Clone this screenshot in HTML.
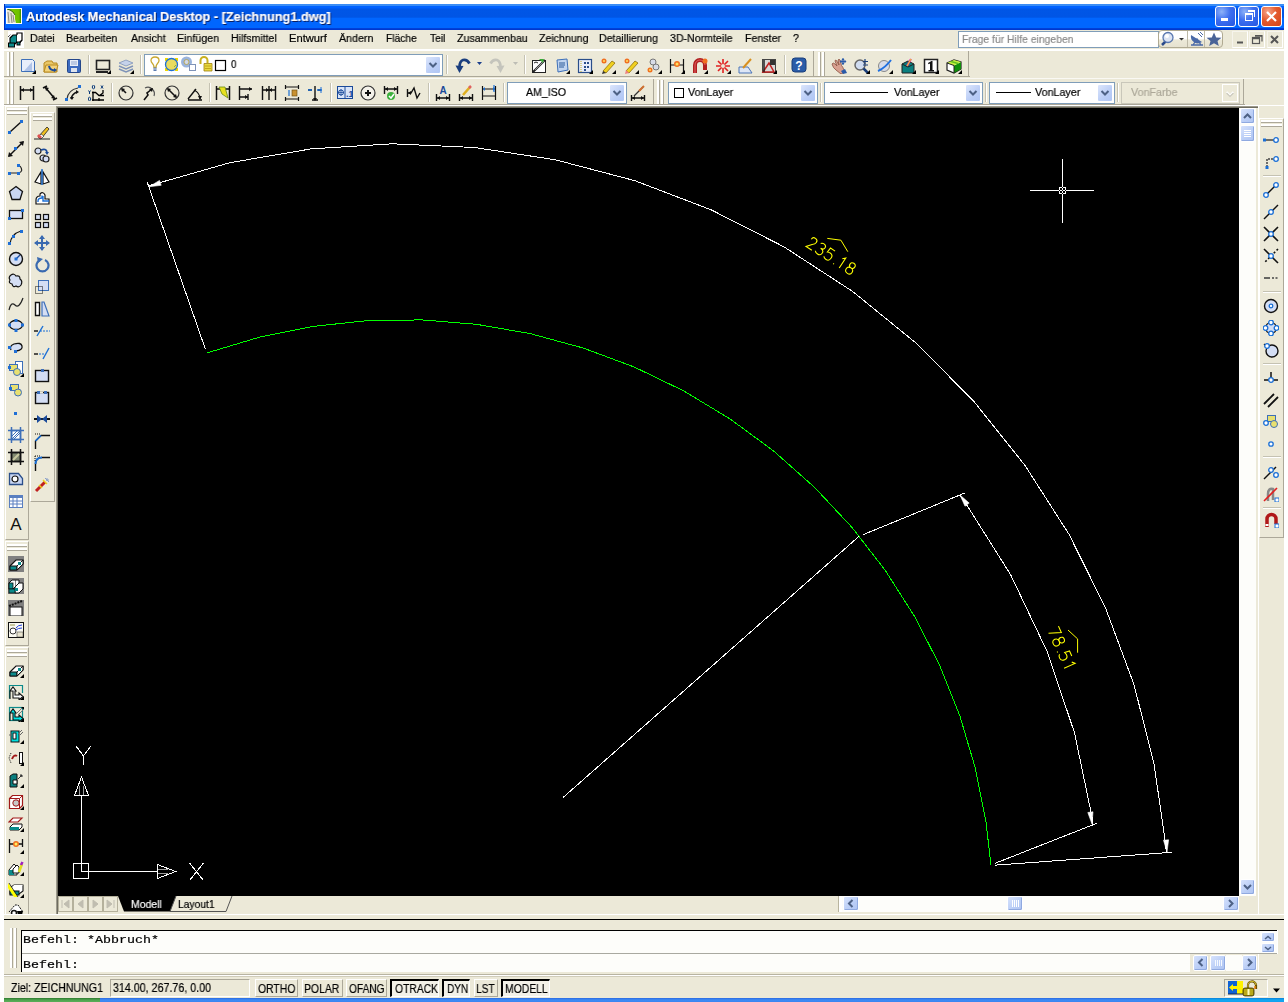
<!DOCTYPE html><html><head><meta charset="utf-8"><style>
html,body{margin:0;padding:0;}
body{width:1288px;height:1002px;position:relative;overflow:hidden;background:#fff;font-family:"Liberation Sans",sans-serif;}
body>div,body>svg{position:absolute;}
.t{white-space:nowrap;line-height:1;will-change:transform;-webkit-text-stroke:0.2px currentColor;}
</style></head><body>
<div style="left:4px;top:4px;width:1280px;height:26px;background:linear-gradient(#3A8CF4 0,#3C8EF6 1.5px,#0062FF 2.5px,#0060FE 4px,#0056E6 5px,#0055E5 13.3px,#0066FF 14px,#0066FF 23.8px,#0040D8 24.5px,#0033CC 26px);"></div>
<div style="left:4px;top:4px;width:1px;height:26px;background:#0030C0"></div>
<div style="left:6px;top:8px;width:14px;height:14px;border:1px solid #fff;background:linear-gradient(90deg,#4F9A00,#74C800 40%,#70C000 85%,#3E8A00)"></div>
<svg style="left:7px;top:9px" width="14" height="14"><path d="M0 0L3 1L6 3L8 6L8 10L9 14H0Z" fill="#E8E4DA"/><path d="M1 3L2 14M4 4L5 14M6 6L7 13" stroke="#8A8A80" stroke-width="1"/><path d="M0 0L3 1L6 3L8 6" stroke="#3A6A10" fill="none"/></svg>
<div class="t" style="left:26px;top:10.97px;font-size:12.79px;font-family:Liberation Sans;font-weight:bold;color:#fff;transform:scaleX(0.9981);transform-origin:0 0;text-shadow:1px 1px 0 #0A1E60;">Autodesk Mechanical Desktop - [Zeichnung1.dwg]</div>
<div style="left:1215px;top:6px;width:19px;height:19px;border:1px solid #fff;border-radius:3px;background:radial-gradient(circle at 30% 25%,#8DB2F8 0,#3C6EF0 45%,#2456E0 100%)"></div>
<div style="left:1238px;top:6px;width:19px;height:19px;border:1px solid #fff;border-radius:3px;background:radial-gradient(circle at 30% 25%,#8DB2F8 0,#3C6EF0 45%,#2456E0 100%)"></div>
<div style="left:1261px;top:6px;width:19px;height:19px;border:1px solid #fff;border-radius:3px;background:radial-gradient(circle at 30% 25%,#F6A58A 0,#E45A2E 45%,#D44418 100%)"></div>
<div style="left:1221px;top:18px;width:7px;height:3px;background:#fff"></div>
<div style="left:1245px;top:13px;width:6px;height:5px;border:1px solid #fff;border-top-width:2px"></div>
<div style="left:1248px;top:10px;width:6px;height:5px;border:1px solid #fff;border-top-width:2px;border-left:none;border-bottom:none"></div>
<svg style="left:1261px;top:6px" width="21" height="21"><path d="M6 6L15 15M15 6L6 15" stroke="#fff" stroke-width="2.2"/></svg>
<div style="left:4px;top:30px;width:1280px;height:19px;background:#ECE9D8"></div>
<div style="left:4px;top:49px;width:1280px;height:2px;background:#fff"></div>
<svg style="left:7px;top:31px" width="18" height="18"><rect x="1" y="0" width="16" height="17" fill="#fff"/><path d="M3 7L6 4H10V11L7 14H3Z" fill="#0B8A8A" stroke="#000" stroke-width="1.2"/><path d="M10 4V2H15V9L12 12H10" fill="#fff" stroke="#000" stroke-width="1.2"/><rect x="10" y="11" width="3" height="3" fill="#0B8A8A" stroke="#000"/><path d="M3 12H8L7 14H3Z" fill="#fff"/><rect x="1.5" y="12" width="6" height="4" fill="#0B8A8A" stroke="#000"/><path d="M1 6L4 3M13 12L16 9" stroke="#000" stroke-dasharray="1 1"/></svg>
<div class="t" style="left:30px;top:33.25px;font-size:11.05px;font-family:Liberation Sans;font-weight:normal;color:#000;transform:scaleX(0.9617);transform-origin:0 0;">Datei</div>
<div class="t" style="left:66px;top:33.25px;font-size:11.05px;font-family:Liberation Sans;font-weight:normal;color:#000;transform:scaleX(0.9620);transform-origin:0 0;">Bearbeiten</div>
<div class="t" style="left:131px;top:33.25px;font-size:11.05px;font-family:Liberation Sans;font-weight:normal;color:#000;transform:scaleX(0.9552);transform-origin:0 0;">Ansicht</div>
<div class="t" style="left:177px;top:33.25px;font-size:11.05px;font-family:Liberation Sans;font-weight:normal;color:#000;transform:scaleX(0.9654);transform-origin:0 0;">Einfügen</div>
<div class="t" style="left:231px;top:33.25px;font-size:11.05px;font-family:Liberation Sans;font-weight:normal;color:#000;transform:scaleX(0.9547);transform-origin:0 0;">Hilfsmittel</div>
<div class="t" style="left:289px;top:33.25px;font-size:11.05px;font-family:Liberation Sans;font-weight:normal;color:#000;transform:scaleX(1.0094);transform-origin:0 0;">Entwurf</div>
<div class="t" style="left:339px;top:33.25px;font-size:11.05px;font-family:Liberation Sans;font-weight:normal;color:#000;transform:scaleX(0.9658);transform-origin:0 0;">Ändern</div>
<div class="t" style="left:386px;top:33.25px;font-size:11.05px;font-family:Liberation Sans;font-weight:normal;color:#000;transform:scaleX(0.9290);transform-origin:0 0;">Fläche</div>
<div class="t" style="left:430px;top:33.25px;font-size:11.05px;font-family:Liberation Sans;font-weight:normal;color:#000;transform:scaleX(0.9291);transform-origin:0 0;">Teil</div>
<div class="t" style="left:457px;top:33.25px;font-size:11.05px;font-family:Liberation Sans;font-weight:normal;color:#000;transform:scaleX(0.9603);transform-origin:0 0;">Zusammenbau</div>
<div class="t" style="left:539px;top:33.25px;font-size:11.05px;font-family:Liberation Sans;font-weight:normal;color:#000;transform:scaleX(0.9603);transform-origin:0 0;">Zeichnung</div>
<div class="t" style="left:599px;top:33.25px;font-size:11.05px;font-family:Liberation Sans;font-weight:normal;color:#000;transform:scaleX(0.9603);transform-origin:0 0;">Detaillierung</div>
<div class="t" style="left:670px;top:33.25px;font-size:11.05px;font-family:Liberation Sans;font-weight:normal;color:#000;transform:scaleX(0.9603);transform-origin:0 0;">3D-Normteile</div>
<div class="t" style="left:745px;top:33.25px;font-size:11.05px;font-family:Liberation Sans;font-weight:normal;color:#000;transform:scaleX(0.9603);transform-origin:0 0;">Fenster</div>
<div class="t" style="left:793px;top:33.25px;font-size:11.05px;font-family:Liberation Sans;font-weight:normal;color:#000;transform:scaleX(0.9603);transform-origin:0 0;">?</div>
<div style="left:958px;top:31px;width:201px;height:17px;background:#fff;border:1px solid #7F9DB9;box-sizing:border-box"></div>
<div class="t" style="left:962px;top:34.20px;font-size:11.34px;font-family:Liberation Sans;font-weight:normal;color:#8a8a8a;transform:scaleX(0.9175);transform-origin:0 0;">Frage für Hilfe eingeben</div>
<div style="left:1158px;top:30px;width:65px;height:18px;box-sizing:border-box;border:1px solid #B0AA92;border-radius:4px;background:linear-gradient(#FFFFFF 0,#FFFFFF 50%,#ECE9D8 55%,#E6E2D0 100%)"></div>
<div style="left:1187px;top:31px;width:1px;height:16px;background:#BDB9A6"></div>
<div style="left:1204px;top:31px;width:1px;height:16px;background:#BDB9A6"></div>
<svg style="left:1158px;top:30px" width="66" height="18"><path d="M4 15L8 11" stroke="#2A4A8A" stroke-width="2.5"/><circle cx="10" cy="7.5" r="5" fill="#DCE4F4" stroke="#5A78B0" stroke-width="1.3"/><circle cx="9" cy="6" r="2" fill="#fff"/><path d="M21 8H26L23.5 10.5Z" fill="#333"/><path d="M33 15H45M35 15L39 9L43 15" fill="none" stroke="#4A6AA8" stroke-width="1.3"/><path d="M33 5A7 7 0 0 0 44 12Z" fill="#4A6AA8"/><path d="M40 3L44 7M42 2L45 5" stroke="#4A6AA8"/><path d="M56 2.5L58.2 7.5L63.5 7.8L59.5 11L60.8 16L56 13.2L51.2 16L52.5 11L48.5 7.8L53.8 7.5Z" fill="#4A6498"/></svg>
<div style="left:1232px;top:31px;width:16px;height:17px;box-sizing:border-box;border-top:1px solid #F6F4EC;border-left:1px solid #F6F4EC;border-right:1px solid #fff;border-bottom:1px solid #fff;background:#ECE9D8"></div>
<div style="left:1249px;top:31px;width:16px;height:17px;box-sizing:border-box;border-top:1px solid #F6F4EC;border-left:1px solid #F6F4EC;border-right:1px solid #fff;border-bottom:1px solid #fff;background:#ECE9D8"></div>
<div style="left:1267px;top:31px;width:16px;height:17px;box-sizing:border-box;border-top:1px solid #F6F4EC;border-left:1px solid #F6F4EC;border-right:1px solid #fff;border-bottom:1px solid #fff;background:#ECE9D8"></div>
<svg style="left:1232px;top:31px" width="52" height="17"><path d="M5 11.5H11" stroke="#555" stroke-width="2"/><rect x="20.5" y="6.5" width="7" height="6" fill="none" stroke="#555" stroke-width="1.2"/><path d="M20.5 7.5H27.5" stroke="#555" stroke-width="1.5"/><path d="M23 4.5H30V10.5" fill="none" stroke="#555" stroke-width="1.2"/><path d="M23 5H30" stroke="#555" stroke-width="1.5"/><path d="M39 5L46 12M46 5L39 12" stroke="#555" stroke-width="2"/></svg>
<div style="left:4px;top:51px;width:1280px;height:26px;background:#ECE9D8"></div>
<div style="left:4px;top:76px;width:966px;height:1px;background:#ACA899"></div>
<div style="left:4px;top:77px;width:1280px;height:1px;background:#ECE9D8"></div>
<div style="left:4px;top:78px;width:1280px;height:1px;background:#FAF9F4"></div>
<div style="left:4px;top:79px;width:1280px;height:26px;background:#ECE9D8"></div>
<div style="left:4px;top:104px;width:1241px;height:1px;background:#ACA899"></div>
<div style="left:4px;top:106px;width:1280px;height:808px;background:#ECE9D8"></div>
<div style="left:7px;top:52px;width:2px;height:24px;background:#fff;border-right:1px solid #ACA899"></div>
<div style="left:11px;top:52px;width:2px;height:24px;background:#fff;border-right:1px solid #ACA899"></div>
<svg style="left:20px;top:58px" width="16" height="16" viewBox="0 0 16 16"><path d="M1.5 1.5H12.5L14.5 3.5V13.5H1.5Z" fill="#E8EEFA" stroke="#3D6FB8"/><path d="M4 13L12 4V13Z" fill="#AFC3E8"/><path d="M16 12V16H12Z" fill="#000"/></svg>
<svg style="left:43px;top:58px" width="16" height="16" viewBox="0 0 16 16"><path d="M1 5L4 3H9L10 5H14V14H1Z" fill="#E9C766" stroke="#B88A20"/><path d="M3 7H15L13 14H1Z" fill="#F2D27A" stroke="#B88A20"/><path d="M6 8Q7 13 12 12" stroke="#1B4A9A" stroke-width="2" fill="none"/><path d="M11 10L14 12L11 14Z" fill="#1B4A9A"/></svg>
<svg style="left:66px;top:58px" width="16" height="16" viewBox="0 0 16 16"><rect x="1.5" y="1.5" width="13" height="13" rx="1" fill="#3C6BC0" stroke="#24468A"/><rect x="4" y="2" width="8" height="6" fill="#E9EEF8"/><path d="M5 4H11M5 6H11" stroke="#8FA6D0"/><rect x="5" y="10" width="6" height="4" fill="#DDE3EE"/></svg>
<div style="left:88px;top:55px;width:1px;height:19px;background:#C5C2B2;border-right:1px solid #fff"></div>
<svg style="left:95px;top:58px" width="16" height="16" viewBox="0 0 16 16"><rect x="1.5" y="2.5" width="13" height="9" fill="#ECE9D8" stroke="#222" stroke-width="1.6"/><path d="M1 14H13" stroke="#222" stroke-width="2"/><path d="M16 12V16H12Z" fill="#000"/></svg>
<svg style="left:118px;top:58px" width="16" height="16" viewBox="0 0 16 16"><path d="M8 2L15 5L8 8L1 5Z" fill="#C5D2EA" stroke="#7F93B8" stroke-width="0.8"/><path d="M1 8L8 11L15 8" fill="none" stroke="#7F93B8" stroke-width="1.5"/><path d="M1 11L8 14L15 11" fill="none" stroke="#7F93B8" stroke-width="1.5"/><path d="M16 12V16H12Z" fill="#000"/></svg>
<div style="left:140px;top:55px;width:1px;height:19px;background:#C5C2B2;border-right:1px solid #fff"></div>
<div style="left:144px;top:54px;width:299px;height:22px;box-sizing:border-box;border:1px solid #7F9DB9;background:#fff"></div>
<div style="left:425px;top:56px;width:16px;height:18px;box-sizing:border-box;border:1px solid #fff;border-radius:2px;background:linear-gradient(135deg,#DCE6FC,#BACDF6 60%,#B0C6F4)"></div>
<svg style="left:425px;top:56px" width="16" height="18"><path d="M4.5 7.0L8 10.5L11.5 7.0" fill="none" stroke="#4D6185" stroke-width="2"/></svg>
<svg style="left:150px;top:56px" width="80" height="18"><path d="M4 11.5Q4 9 2.5 7.5Q1 6 1 4.5Q1 1 5 1Q9 1 9 4.5Q9 6 7.5 7.5Q6 9 6 11.5Z" fill="#fff" stroke="#C8A830" stroke-width="1.3"/><rect x="3.5" y="11.5" width="3" height="3.5" fill="#5A7AB0"/><path d="M3.5 13H6.5" stroke="#fff" stroke-width="0.7"/><rect x="15" y="2" width="3" height="3" fill="#F0D800"/><rect x="25" y="2" width="3" height="3" fill="#F0D800"/><rect x="15" y="12" width="3" height="3" fill="#F0D800"/><rect x="25" y="12" width="3" height="3" fill="#F0D800"/><circle cx="21.5" cy="8.5" r="6" fill="#E8DC60" stroke="#2070D0" stroke-width="1.3"/><path d="M24 11L26 9" stroke="#90B040"/><circle cx="36.5" cy="6" r="5.5" fill="#9AB4DC"/><circle cx="36.5" cy="6" r="2.5" fill="#D0D8E8" stroke="#B8A040" stroke-width="0.8"/><rect x="39.5" y="8.5" width="6" height="6" fill="#fff" stroke="#7F93B8"/><path d="M50.5 8V4.5A3.5 3.5 0 0 1 57.5 4.5V7" fill="none" stroke="#C8B020" stroke-width="2"/><path d="M54 7.5H62V15H54Z" fill="#E8D840" stroke="#A08010" stroke-width="0.8"/><path d="M55 10H61M55 12.5H61" stroke="#B89A10" stroke-width="0.8"/><rect x="65.5" y="4.5" width="10" height="10" fill="#fff" stroke="#000" stroke-width="1.2"/></svg>
<div class="t" style="left:231px;top:58.70px;font-size:11.34px;font-family:Liberation Sans;font-weight:normal;color:#000;transform:scaleX(0.8723);transform-origin:0 0;">0</div>
<div style="left:446px;top:55px;width:1px;height:19px;background:#C5C2B2;border-right:1px solid #fff"></div>
<svg style="left:455px;top:58px" width="16" height="16" viewBox="0 0 16 16"><path d="M14.5 5.5Q12 1 8 2Q5 3 4.5 8" fill="none" stroke="#1A3E7E" stroke-width="2.8"/><path d="M0.5 7.5L4.5 15L8.5 8Z" fill="#1A3E7E"/></svg>
<svg style="left:477px;top:62px" width="6" height="4"><path d="M0 0H5L2.5 3Z" fill="#1A3E8C"/></svg>
<svg style="left:489px;top:58px" width="16" height="16" viewBox="0 0 16 16"><path d="M1.5 5.5Q4 1 8 2Q11 3 11.5 8" fill="none" stroke="#C4C4BC" stroke-width="2.8"/><path d="M15.5 7.5L11.5 15L7.5 8Z" fill="#C4C4BC"/></svg>
<svg style="left:513px;top:62px" width="6" height="4"><path d="M0 0H5L2.5 3Z" fill="#BDBDB5"/></svg>
<div style="left:524px;top:55px;width:1px;height:19px;background:#C5C2B2;border-right:1px solid #fff"></div>
<svg style="left:531px;top:58px" width="16" height="16" viewBox="0 0 16 16"><rect x="1.5" y="2.5" width="13" height="12" fill="#fff" stroke="#222"/><path d="M2 14L14 2" stroke="#222" stroke-width="2"/><path d="M4 12L13 3" stroke="#999" stroke-width="1"/><path d="M8 1L13 1L12 5Z" fill="#3AAA3A"/><path d="M3 5Q5 3 7 5" stroke="#222" fill="none"/></svg>
<svg style="left:554px;top:58px" width="16" height="16" viewBox="0 0 16 16"><path d="M3 2L13 1L14 12L4 14Z" fill="#C0D4F0" stroke="#3D6FB8"/><path d="M5 5H11M5 7H11M5 9H10" stroke="#2A5A9A"/><path d="M16 12V16H12Z" fill="#000"/></svg>
<svg style="left:577px;top:58px" width="16" height="16" viewBox="0 0 16 16"><rect x="1.5" y="1.5" width="13" height="13" fill="#E8EEFA" stroke="#2A4E8A" stroke-width="1.2"/><path d="M4 3V14" stroke="#C8B020" stroke-dasharray="1 1"/><rect x="7" y="4" width="2" height="2" fill="#2A4E8A"/><rect x="10" y="4" width="2" height="2" fill="#2A4E8A"/><rect x="7" y="8" width="2" height="2" fill="#2A4E8A"/><rect x="10" y="8" width="2" height="2" fill="#2A4E8A"/><rect x="7" y="11" width="2" height="2" fill="#2A4E8A"/><path d="M16 12V16H12Z" fill="#000"/></svg>
<svg style="left:600px;top:58px" width="16" height="16" viewBox="0 0 16 16"><path d="M3 13L12 3L15 5L6 15Z" fill="#F0D020" stroke="#806000" stroke-width="0.7"/><path d="M3 13L6 15L2 16Z" fill="#333"/><circle cx="4" cy="3" r="2.5" fill="#F07020"/><circle cx="4" cy="3" r="1" fill="#FFE060"/><path d="M16 12V16H12Z" fill="#000"/></svg>
<svg style="left:623px;top:58px" width="16" height="16" viewBox="0 0 16 16"><path d="M3 13L12 3L15 5L6 15Z" fill="#F0D020" stroke="#806000" stroke-width="0.7"/><path d="M3 12L6 15L2 16Z" fill="#F08080"/><circle cx="4" cy="3" r="2.5" fill="#F07020"/><circle cx="4" cy="3" r="1" fill="#FFE060"/><path d="M16 12V16H12Z" fill="#000"/></svg>
<svg style="left:646px;top:58px" width="16" height="16" viewBox="0 0 16 16"><circle cx="7" cy="4" r="3" fill="#D8DCE8" stroke="#777"/><circle cx="10" cy="9" r="3" fill="#D8DCE8" stroke="#777"/><circle cx="4" cy="12" r="2.5" fill="#F07020"/><circle cx="4" cy="12" r="1" fill="#FFE060"/><path d="M16 12V16H12Z" fill="#000"/></svg>
<svg style="left:669px;top:58px" width="16" height="16" viewBox="0 0 16 16"><path d="M1.5 1V15M14.5 1V15M2 7H14" stroke="#111" stroke-width="1.2"/><circle cx="8" cy="6" r="3" fill="#F07020"/><circle cx="8" cy="6" r="1.5" fill="#FFE060"/><path d="M16 12V16H12Z" fill="#000"/></svg>
<svg style="left:692px;top:58px" width="16" height="16" viewBox="0 0 16 16"><path d="M3 15V7A5 5 0 0 1 13 7V12" fill="none" stroke="#B02020" stroke-width="4"/><path d="M3 15V7A5 5 0 0 1 13 7" fill="none" stroke="#E06060" stroke-width="1"/><circle cx="13" cy="3" r="2.5" fill="#F07020"/><path d="M16 12V16H12Z" fill="#000"/></svg>
<svg style="left:715px;top:58px" width="16" height="16" viewBox="0 0 16 16"><path d="M8 1V15M1 8H15M3 3L13 13M13 3L3 13" stroke="#E02020" stroke-width="1.6"/><circle cx="8" cy="8" r="2" fill="#ECE9D8"/><path d="M16 12V16H12Z" fill="#000"/></svg>
<svg style="left:738px;top:58px" width="16" height="16" viewBox="0 0 16 16"><path d="M1 9H10L14 15H1Z" fill="#DDE6F6" stroke="#4A74B8"/><path d="M5 10L13 1" stroke="#D89020" stroke-width="2"/></svg>
<svg style="left:761px;top:58px" width="16" height="16" viewBox="0 0 16 16"><rect x="1.5" y="1.5" width="13" height="13" fill="#D8D8D8" stroke="#444"/><path d="M2 14L8 5L13 14Z" fill="none" stroke="#C02020" stroke-width="1.5"/><rect x="9" y="2" width="5" height="5" fill="#333"/><path d="M3 2V14" stroke="#222" stroke-width="1.5"/><path d="M16 12V16H12Z" fill="#000"/></svg>
<div style="left:784px;top:55px;width:1px;height:19px;background:#C5C2B2;border-right:1px solid #fff"></div>
<svg style="left:791px;top:57px" width="16" height="16" viewBox="0 0 16 16"><rect x="1" y="1" width="14" height="14" rx="3" fill="#2A5CA8" stroke="#1A3E7A"/><text x="8" y="13" font-size="12" font-weight="bold" fill="#fff" text-anchor="middle" font-family="Liberation Sans">?</text></svg>
<div style="left:813px;top:51px;width:1px;height:26px;background:#ACA899"></div>
<div style="left:818px;top:52px;width:2px;height:24px;background:#fff;border-right:1px solid #ACA899"></div>
<div style="left:822px;top:52px;width:2px;height:24px;background:#fff;border-right:1px solid #ACA899"></div>
<svg style="left:831px;top:58px" width="16" height="16" viewBox="0 0 16 16"><path d="M1 6Q2 4 4 6L6 8L4 3Q4 1.5 5.5 2.5L8 7L7 2Q8 0.5 9 2L10.5 7.5Q12 9 12.5 11L14 14L10 16L5 12Q2 10 1 6Z" fill="#D8A090" stroke="#8A5040" stroke-width="0.8"/><path d="M10 13L14 11L16 15L12 16Z" fill="#2A5AA8"/><path d="M12 0.5V6.5M9 3.5H15" stroke="#2A5AA8" stroke-width="1.3"/><path d="M12 0L10.5 2H13.5ZM12 7L10.5 5H13.5ZM8.5 3.5L10.5 2V5ZM15.5 3.5L13.5 2V5Z" fill="#2A5AA8"/></svg>
<svg style="left:854px;top:58px" width="16" height="16" viewBox="0 0 16 16"><circle cx="6" cy="7" r="5" fill="#D0DCF0" stroke="#666" stroke-width="1.5"/><path d="M9.5 10.5L14 15" stroke="#1A3E7A" stroke-width="2.5"/><path d="M11 1V6M9 3.5H14M9 7H14" stroke="#1A3E7A" stroke-width="1.2"/><path d="M16 12V16H12Z" fill="#000"/></svg>
<svg style="left:877px;top:58px" width="16" height="16" viewBox="0 0 16 16"><circle cx="7" cy="8" r="5.5" fill="#D8DCE8" stroke="#888"/><path d="M1 13Q8 10 14 2" fill="none" stroke="#2070E0" stroke-width="2"/><path d="M16 12V16H12Z" fill="#000"/></svg>
<svg style="left:900px;top:58px" width="16" height="16" viewBox="0 0 16 16"><path d="M2 6L8 3L14 6V15H2Z" fill="#0B7F7F" stroke="#222"/><path d="M2 6L8 9L14 6" fill="none" stroke="#222"/><path d="M7 8L11 1" stroke="#E020A0" stroke-width="2"/><path d="M7 8L11 1" stroke="#F0E020" stroke-width="1"/><path d="M16 12V16H12Z" fill="#000"/></svg>
<svg style="left:923px;top:58px" width="16" height="16" viewBox="0 0 16 16"><rect x="1.5" y="1.5" width="13" height="13" fill="#fff" stroke="#222" stroke-width="1.5"/><path d="M5 5L8.5 3H9.5V12H11V13.5H5.5V12H7V5.5L5.5 6.3Z" fill="#111"/><path d="M16 12V16H12Z" fill="#000"/></svg>
<svg style="left:946px;top:58px" width="16" height="16" viewBox="0 0 16 16"><path d="M1 5L8 2L15 4V11L8 15L1 12Z" fill="#fff" stroke="#222" stroke-width="1.2"/><path d="M8 7.5L15 4V11L8 15Z" fill="#10900A"/><path d="M1 5L8 2L15 4L8 7.5Z" fill="#C8F040"/><path d="M1 5L8 7.5V15" fill="none" stroke="#222"/><path d="M5 3.5L12 5.5" stroke="#60C020" stroke-width="1.5"/><path d="M16 12V16H12Z" fill="#000"/></svg>
<div style="left:968px;top:51px;width:1px;height:26px;background:#ACA899"></div>
<div style="left:7px;top:80px;width:2px;height:24px;background:#fff;border-right:1px solid #ACA899"></div>
<div style="left:11px;top:80px;width:2px;height:24px;background:#fff;border-right:1px solid #ACA899"></div>
<svg style="left:19px;top:85px" width="16" height="16" viewBox="0 0 16 16"><path d="M1.5 1V15M14.5 1V15M2 5H14" stroke="#111" stroke-width="1.5"/><path d="M2 5L5 3V7ZM14 5L11 3V7Z" fill="#111"/></svg>
<svg style="left:42px;top:85px" width="16" height="16" viewBox="0 0 16 16"><path d="M1 3L5 1M11 15L15 13M3 2L13 14" stroke="#111" stroke-width="1.6"/><path d="M3 2L7 3L4 6Z M13 14L9 13L12 10Z" fill="#111"/></svg>
<svg style="left:65px;top:85px" width="16" height="16" viewBox="0 0 16 16"><path d="M2 14Q3 5 13 3" fill="none" stroke="#333" stroke-width="1.2"/><path d="M6 14Q7 9 12 7" fill="none" stroke="#111" stroke-width="1.5"/><path d="M5 12L7 15L9 12ZM11 5L14 7L11 9Z" fill="#111"/><rect x="0" y="13" width="3" height="3" fill="#1F6FD6"/><rect x="13" y="0" width="3" height="3" fill="#1F6FD6"/></svg>
<svg style="left:88px;top:85px" width="16" height="16" viewBox="0 0 16 16"><g fill="none" stroke="#0A3A7A" stroke-width="1"><ellipse cx="5.5" cy="2" rx="1.2" ry="1.8"/><ellipse cx="1.5" cy="14" rx="1.2" ry="1.8"/><path d="M0.5 5.5L1.5 7M2.5 5.5L1.5 7V9M13 0.5L15 3.5M15 0.5L13 3.5"/></g><path d="M5 6.5V16M4 15H16M4 7.5H7.5L11 10.5H16M15 5V8L11.5 10.5M11 13V16" fill="none" stroke="#000" stroke-width="1.3"/></svg>
<div style="left:111px;top:83px;width:1px;height:19px;background:#C5C2B2;border-right:1px solid #fff"></div>
<svg style="left:118px;top:85px" width="16" height="16" viewBox="0 0 16 16"><circle cx="8" cy="8" r="7" fill="none" stroke="#333" stroke-width="1.2"/><path d="M8 8L4 4" stroke="#111" stroke-width="1.6"/><path d="M3 3L7 4L4 7Z" fill="#111"/></svg>
<svg style="left:141px;top:85px" width="16" height="16" viewBox="0 0 16 16"><path d="M4 3A6.5 6.5 0 0 1 13 11" fill="none" stroke="#555" stroke-width="1.2"/><path d="M3 15L7 10L6 8L11 4" stroke="#111" stroke-width="1.6" fill="none"/><path d="M12 3L8 4L11 7Z" fill="#111"/></svg>
<svg style="left:164px;top:85px" width="16" height="16" viewBox="0 0 16 16"><circle cx="8" cy="8" r="7" fill="none" stroke="#333" stroke-width="1.2"/><path d="M4 4L12 12" stroke="#111" stroke-width="1.6"/><path d="M3 3L7 4L4 7ZM13 13L9 12L12 9Z" fill="#111"/></svg>
<svg style="left:187px;top:85px" width="16" height="16" viewBox="0 0 16 16"><path d="M1 15H15M1 14L9 4" stroke="#111" stroke-width="1.4"/><path d="M7 5Q13 8 13 14" fill="none" stroke="#111" stroke-width="1.2"/><path d="M11 11L13 15L15 11Z" fill="#111"/></svg>
<div style="left:209px;top:83px;width:1px;height:19px;background:#C5C2B2;border-right:1px solid #fff"></div>
<svg style="left:215px;top:85px" width="16" height="16" viewBox="0 0 16 16"><path d="M1.5 1V15M14.5 1V15M2 4H14" stroke="#111" stroke-width="1.5"/><path d="M4 2L10 2L13 13L7 9Z" fill="#E8E020" stroke="#6A8A10" stroke-width="0.8"/></svg>
<svg style="left:238px;top:85px" width="16" height="16" viewBox="0 0 16 16"><path d="M1.5 1V15M2 4H14M2 12H10M10 9V15" stroke="#111" stroke-width="1.4"/><path d="M14 4L11 2V6ZM10 12L7 10V14Z" fill="#111"/></svg>
<svg style="left:261px;top:85px" width="16" height="16" viewBox="0 0 16 16"><path d="M1.5 1V15M8 1V15M14.5 1V15M2 5H14" stroke="#111" stroke-width="1.4"/><path d="M8 5L5 3V7ZM8 5L11 3V7Z" fill="#111"/></svg>
<svg style="left:284px;top:85px" width="16" height="16" viewBox="0 0 16 16"><path d="M1 2H15M1 14H15M1.5 0V4M14.5 0V4M1.5 12V16M14.5 12V16" stroke="#111" stroke-width="1.2"/><rect x="8" y="5" width="5" height="6" fill="#C89030" stroke="#6A4A10" stroke-width="0.6"/><path d="M5 5V11" stroke="#1A6FD6" stroke-width="1.2"/></svg>
<svg style="left:307px;top:85px" width="16" height="16" viewBox="0 0 16 16"><path d="M8 1V15M5 15H11M1 5H5M11 5H14" stroke="#111" stroke-width="1.4"/><path d="M1 5H5M10 5H15" stroke="#1A6FD6" stroke-width="1.6"/><path d="M14 2V8" stroke="#1A6FD6"/><path d="M6 13L8 16L10 13Z" fill="#111"/></svg>
<div style="left:330px;top:83px;width:1px;height:19px;background:#C5C2B2;border-right:1px solid #fff"></div>
<svg style="left:337px;top:85px" width="16" height="16" viewBox="0 0 16 16"><rect x="0.5" y="1.5" width="15" height="12" fill="#D8E4F8" stroke="#1A4A9A"/><path d="M8 2V13" stroke="#1A4A9A"/><circle cx="4" cy="7.5" r="2.5" fill="none" stroke="#1A4A9A"/><path d="M4 4V11M1 7.5H7" stroke="#1A4A9A" stroke-width="0.8"/><text x="9" y="12" font-size="9" font-weight="bold" fill="#1A4A9A" font-family="Liberation Sans">.1</text></svg>
<svg style="left:360px;top:85px" width="16" height="16" viewBox="0 0 16 16"><circle cx="8" cy="8" r="7" fill="#F4F2EA" stroke="#333" stroke-width="1.2"/><path d="M8 5V11M5 8H11" stroke="#111" stroke-width="2"/></svg>
<svg style="left:383px;top:85px" width="16" height="16" viewBox="0 0 16 16"><path d="M1.5 1V9M14.5 1V9M2 4H14" stroke="#111" stroke-width="1.4"/><path d="M14 4L11 2V6ZM2 4L5 2V6Z" fill="#111"/><circle cx="8" cy="11" r="4" fill="#3CB03C"/><path d="M6 11L8 13L11 9" stroke="#fff" stroke-width="1.5" fill="none"/></svg>
<svg style="left:406px;top:85px" width="16" height="16" viewBox="0 0 16 16"><path d="M1.5 4V12M2 8H5L8 3L11 13L14 8" stroke="#111" stroke-width="1.4" fill="none"/><path d="M2 8L5 6V10Z" fill="#111"/></svg>
<div style="left:428px;top:83px;width:1px;height:19px;background:#C5C2B2;border-right:1px solid #fff"></div>
<svg style="left:435px;top:85px" width="16" height="16" viewBox="0 0 16 16"><path d="M1.5 9V16M14.5 9V16M2 13H14" stroke="#111" stroke-width="1.4"/><path d="M2 13L5 11V15ZM14 13L11 11V15Z" fill="#111"/><text x="8" y="9" font-size="10" font-weight="bold" fill="#1A4A9A" text-anchor="middle" font-family="Liberation Sans">A</text></svg>
<svg style="left:458px;top:85px" width="16" height="16" viewBox="0 0 16 16"><path d="M1.5 9V16M14.5 9V16M2 13H14" stroke="#111" stroke-width="1.4"/><path d="M2 13L5 11V15ZM14 13L11 11V15Z" fill="#111"/><path d="M5 10L12 2" stroke="#E0B020" stroke-width="2.5"/><path d="M11 3L13 1" stroke="#E06060" stroke-width="2.5"/></svg>
<svg style="left:481px;top:85px" width="16" height="16" viewBox="0 0 16 16"><path d="M1.5 1V15M14.5 1V15M2 4H14M2 11H14" stroke="#111" stroke-width="1.2"/><path d="M13 0V7" stroke="#1A6FD6" stroke-width="1.2"/><path d="M2 4L4 2V6ZM14 4L12 2V6Z" fill="#1A6FD6"/></svg>
<div style="left:503px;top:83px;width:1px;height:19px;background:#C5C2B2;border-right:1px solid #fff"></div>
<div style="left:507px;top:82px;width:120px;height:22px;box-sizing:border-box;border:1px solid #7F9DB9;background:#fff"></div>
<div style="left:609px;top:84px;width:16px;height:18px;box-sizing:border-box;border:1px solid #fff;border-radius:2px;background:linear-gradient(135deg,#DCE6FC,#BACDF6 60%,#B0C6F4)"></div>
<svg style="left:609px;top:84px" width="16" height="18"><path d="M4.5 7.0L8 10.5L11.5 7.0" fill="none" stroke="#4D6185" stroke-width="2"/></svg>
<div class="t" style="left:525.6px;top:87.47px;font-size:10.90px;font-family:Liberation Sans;font-weight:normal;color:#000;transform:scaleX(0.9710);transform-origin:0 0;">AM_ISO</div>
<svg style="left:630px;top:85px" width="16" height="16" viewBox="0 0 16 16"><path d="M1.5 10V16M14.5 10V16M2 13H14" stroke="#111" stroke-width="1.4"/><path d="M2 13L5 11V15ZM14 13L11 11V15Z" fill="#111"/><path d="M4 11L13 2" stroke="#333" stroke-width="1.2"/><path d="M9 6L14 1" stroke="#D07030" stroke-width="2"/></svg>
<div style="left:653px;top:79px;width:1px;height:26px;background:#ACA899"></div>
<div style="left:657px;top:80px;width:2px;height:24px;background:#fff;border-right:1px solid #ACA899"></div>
<div style="left:661px;top:80px;width:2px;height:24px;background:#fff;border-right:1px solid #ACA899"></div>
<div style="left:668px;top:82px;width:150px;height:22px;box-sizing:border-box;border:1px solid #7F9DB9;background:#fff"></div>
<div style="left:800px;top:84px;width:16px;height:18px;box-sizing:border-box;border:1px solid #fff;border-radius:2px;background:linear-gradient(135deg,#DCE6FC,#BACDF6 60%,#B0C6F4)"></div>
<svg style="left:800px;top:84px" width="16" height="18"><path d="M4.5 7.0L8 10.5L11.5 7.0" fill="none" stroke="#4D6185" stroke-width="2"/></svg>
<div style="left:674px;top:88px;width:10px;height:10px;box-sizing:border-box;border:1px solid #000;background:#fff"></div>
<div class="t" style="left:688px;top:87.25px;font-size:11.05px;font-family:Liberation Sans;font-weight:normal;color:#000;transform:scaleX(0.9684);transform-origin:0 0;">VonLayer</div>
<div style="left:820px;top:83px;width:1px;height:19px;background:#C5C2B2;border-right:1px solid #fff"></div>
<div style="left:824px;top:82px;width:159px;height:22px;box-sizing:border-box;border:1px solid #7F9DB9;background:#fff"></div>
<div style="left:965px;top:84px;width:16px;height:18px;box-sizing:border-box;border:1px solid #fff;border-radius:2px;background:linear-gradient(135deg,#DCE6FC,#BACDF6 60%,#B0C6F4)"></div>
<svg style="left:965px;top:84px" width="16" height="18"><path d="M4.5 7.0L8 10.5L11.5 7.0" fill="none" stroke="#4D6185" stroke-width="2"/></svg>
<div style="left:830px;top:92px;width:58px;height:1px;background:#000"></div>
<div class="t" style="left:894px;top:87.25px;font-size:11.05px;font-family:Liberation Sans;font-weight:normal;color:#000;transform:scaleX(0.9748);transform-origin:0 0;">VonLayer</div>
<div style="left:985px;top:83px;width:1px;height:19px;background:#C5C2B2;border-right:1px solid #fff"></div>
<div style="left:989px;top:82px;width:126px;height:22px;box-sizing:border-box;border:1px solid #7F9DB9;background:#fff"></div>
<div style="left:1097px;top:84px;width:16px;height:18px;box-sizing:border-box;border:1px solid #fff;border-radius:2px;background:linear-gradient(135deg,#DCE6FC,#BACDF6 60%,#B0C6F4)"></div>
<svg style="left:1097px;top:84px" width="16" height="18"><path d="M4.5 7.0L8 10.5L11.5 7.0" fill="none" stroke="#4D6185" stroke-width="2"/></svg>
<div style="left:996px;top:92px;width:35px;height:1px;background:#000"></div>
<div class="t" style="left:1034.6px;top:87.25px;font-size:11.05px;font-family:Liberation Sans;font-weight:normal;color:#000;transform:scaleX(0.9727);transform-origin:0 0;">VonLayer</div>
<div style="left:1117px;top:83px;width:1px;height:19px;background:#C5C2B2;border-right:1px solid #fff"></div>
<div style="left:1121px;top:82px;width:119px;height:22px;box-sizing:border-box;border:1px solid #C9C7BA;background:#ECE9D8"></div>
<div style="left:1222px;top:84px;width:16px;height:18px;box-sizing:border-box;border:1px solid #fff;background:#ECE9D8"></div>
<svg style="left:1222px;top:84px" width="16" height="18"><path d="M4.5 8.0L8 11.5L11.5 8.0" fill="none" stroke="#fff" stroke-width="2"/><path d="M4.5 9.0L8 12.5L11.5 9.0" fill="none" stroke="#C9C7BA" stroke-width="1.2"/></svg>
<div class="t" style="left:1130.8px;top:87.25px;font-size:11.05px;font-family:Liberation Sans;font-weight:normal;color:#ACA899;transform:scaleX(0.9708);transform-origin:0 0;">VonFarbe</div>
<div style="left:1243px;top:79px;width:1px;height:26px;background:#ACA899"></div>
<div style="left:5px;top:106px;width:24px;height:434px;box-sizing:border-box;border-left:1px solid #fff;border-top:1px solid #fff;border-right:1px solid #ACA899;border-bottom:1px solid #ACA899;background:#ECE9D8"></div>
<div style="left:7px;top:108px;width:20px;height:2px;background:#fff;border-bottom:1px solid #ACA899"></div>
<div style="left:7px;top:112px;width:20px;height:2px;background:#fff;border-bottom:1px solid #ACA899"></div>
<svg style="left:8px;top:119px" width="16" height="16" viewBox="0 0 16 16"><path d="M2 13L13 3" stroke="#111" stroke-width="1.4"/><rect x="0" y="12" width="3" height="3" fill="#1F6FD6"/><rect x="12" y="1" width="3" height="3" fill="#1F6FD6"/></svg>
<svg style="left:8px;top:141px" width="16" height="16" viewBox="0 0 16 16"><path d="M1 15L15 1" stroke="#111" stroke-width="1.4"/><path d="M0 16L1 11L5 15Z M16 0L11 1L15 5Z" fill="#111"/><rect x="6" y="6" width="3" height="3" fill="#1F6FD6"/></svg>
<svg style="left:8px;top:163px" width="16" height="16" viewBox="0 0 16 16"><path d="M2 10H11Q16 8 12 3" fill="none" stroke="#222" stroke-width="1.2"/><rect x="0" y="9" width="3" height="3" fill="#1F6FD6"/><rect x="9" y="9" width="3" height="3" fill="#1F6FD6"/><rect x="9" y="1" width="3" height="3" fill="#1F6FD6"/></svg>
<svg style="left:8px;top:185px" width="16" height="16" viewBox="0 0 16 16"><path d="M8 1.5L14.5 6.5L12 14.5H4L1.5 6.5Z" fill="#C9D6F2" stroke="#111" stroke-width="1.3"/></svg>
<svg style="left:8px;top:207px" width="16" height="16" viewBox="0 0 16 16"><rect x="1.5" y="3.5" width="13" height="8" fill="#D4DEF4" stroke="#111" stroke-width="1.3"/><rect x="0" y="10" width="3" height="3" fill="#1F6FD6"/><rect x="13" y="2" width="3" height="3" fill="#1F6FD6"/></svg>
<svg style="left:8px;top:229px" width="16" height="16" viewBox="0 0 16 16"><path d="M2 15Q3 5 13 2" fill="none" stroke="#111" stroke-width="1.3"/><rect x="0" y="13" width="3" height="3" fill="#1F6FD6"/><rect x="4" y="6" width="3" height="3" fill="#1F6FD6"/><rect x="12" y="1" width="3" height="3" fill="#1F6FD6"/></svg>
<svg style="left:8px;top:251px" width="16" height="16" viewBox="0 0 16 16"><circle cx="8" cy="8" r="6.5" fill="#D4DEF4" stroke="#111" stroke-width="1.4"/><path d="M8 8L12 4" stroke="#1A4A9A" stroke-width="1.2"/><rect x="6.5" y="6.5" width="3" height="3" fill="#1F6FD6"/></svg>
<svg style="left:8px;top:273px" width="16" height="16" viewBox="0 0 16 16"><path d="M3 2Q6 0 8 3Q12 2 12 6Q15 8 13 12Q11 15 8 13Q5 15 4 11Q0 10 2 7Q0 4 3 2Z" fill="#D4DEF4" stroke="#111" stroke-width="1.2"/></svg>
<svg style="left:8px;top:295px" width="16" height="16" viewBox="0 0 16 16"><path d="M1 15Q3 6 7 10Q11 14 15 3" fill="none" stroke="#222" stroke-width="1.2"/></svg>
<svg style="left:8px;top:317px" width="16" height="16" viewBox="0 0 16 16"><ellipse cx="8" cy="8" rx="6.5" ry="4.5" fill="#D4DEF4" stroke="#111" stroke-width="1.3"/><rect x="6.5" y="2" width="3" height="3" fill="#1F6FD6"/><rect x="0" y="6.5" width="3" height="3" fill="#1F6FD6"/><rect x="13" y="6.5" width="3" height="3" fill="#1F6FD6"/><rect x="6.5" y="12" width="3" height="3" fill="#1F6FD6"/></svg>
<svg style="left:8px;top:339px" width="16" height="16" viewBox="0 0 16 16"><path d="M3 11Q1 7 6 5Q13 3 14 7Q15 11 8 12" fill="#D4DEF4" stroke="#111" stroke-width="1.3"/><rect x="0" y="7" width="3" height="3" fill="#1F6FD6"/><rect x="6" y="11" width="3" height="3" fill="#1F6FD6"/></svg>
<svg style="left:8px;top:361px" width="16" height="16" viewBox="0 0 16 16"><rect x="7.5" y="0.5" width="7" height="12" fill="#fff" stroke="#3D6FB8"/><rect x="1.5" y="3.5" width="8" height="6" fill="#E8E070" stroke="#3D6FB8"/><circle cx="9" cy="11" r="3.5" fill="#E8E070" stroke="#3D6FB8"/><rect x="0" y="5" width="3" height="3" fill="#1F6FD6"/><path d="M16 12V16H12Z" fill="#000"/></svg>
<svg style="left:8px;top:383px" width="16" height="16" viewBox="0 0 16 16"><rect x="2.5" y="1.5" width="8" height="6" fill="#E8E070" stroke="#3D6FB8"/><circle cx="10" cy="9.5" r="3.5" fill="#E8E070" stroke="#3D6FB8"/><rect x="1" y="4" width="3" height="3" fill="#1F6FD6"/></svg>
<svg style="left:8px;top:405px" width="16" height="16" viewBox="0 0 16 16"><rect x="6" y="7" width="3" height="3" fill="#1F6FD6"/></svg>
<svg style="left:8px;top:427px" width="16" height="16" viewBox="0 0 16 16"><rect x="3.5" y="3.5" width="9" height="9" fill="#fff" stroke="#3D6FB8" stroke-width="1.5"/><path d="M0 3.5H16M0 12.5H16M3.5 0V16M12.5 0V16" stroke="#3D6FB8" stroke-width="1.5"/><path d="M4 9L9 4M6 12L12 6M4 12L12 4" stroke="#3D6FB8"/></svg>
<svg style="left:8px;top:449px" width="16" height="16" viewBox="0 0 16 16"><rect x="3.5" y="3.5" width="9" height="9" fill="#808870" stroke="#111" stroke-width="1.5"/><path d="M0 3.5H16M0 12.5H16M3.5 0V16M12.5 0V16" stroke="#111" stroke-width="1.5"/><path d="M5 11L11 5" stroke="#C8C8A0" stroke-width="2"/></svg>
<svg style="left:8px;top:471px" width="16" height="16" viewBox="0 0 16 16"><path d="M1.5 2.5H10.5L14.5 7.5V13.5H1.5Z" fill="#C9D6F2" stroke="#2A4E8A" stroke-width="1.3"/><circle cx="7" cy="8" r="3" fill="#fff" stroke="#111" stroke-width="1.2"/></svg>
<svg style="left:8px;top:493px" width="16" height="16" viewBox="0 0 16 16"><rect x="1.5" y="2.5" width="13" height="12" fill="#fff" stroke="#5A7FC0"/><rect x="1" y="2" width="14" height="3" fill="#5A7FC0"/><path d="M1 8H15M1 11H15M5 5V15M9 5V15" stroke="#5A7FC0"/></svg>
<svg style="left:8px;top:515px" width="16" height="16" viewBox="0 0 16 16"><text x="8" y="15" font-size="17" fill="#111" text-anchor="middle" font-family="Liberation Sans">A</text></svg>
<div style="left:30px;top:112px;width:25px;height:390px;box-sizing:border-box;border-left:1px solid #fff;border-top:1px solid #fff;border-right:1px solid #ACA899;border-bottom:1px solid #ACA899;background:#ECE9D8"></div>
<div style="left:33px;top:114px;width:19px;height:2px;background:#fff;border-bottom:1px solid #ACA899"></div>
<div style="left:33px;top:118px;width:19px;height:2px;background:#fff;border-bottom:1px solid #ACA899"></div>
<svg style="left:34px;top:125px" width="16" height="16" viewBox="0 0 16 16"><path d="M4 12L13 2L15 4L7 14Z" fill="#F0C020" stroke="#222" stroke-width="0.8"/><path d="M4 12L7 9L10 11L7 14Z" fill="#fff" stroke="#222" stroke-width="0.6"/><path d="M3 11L5 9L8 12L6 14Z" fill="#E05050"/><path d="M0 14H16" stroke="#222"/></svg>
<svg style="left:34px;top:147px" width="16" height="16" viewBox="0 0 16 16"><circle cx="4" cy="4" r="3" fill="#D4DEF4" stroke="#222" stroke-width="1.2"/><circle cx="9" cy="11" r="3" fill="#D4DEF4" stroke="#222" stroke-width="1.2"/><circle cx="12" cy="12" r="3" fill="#D4DEF4" stroke="#222" stroke-width="1.2"/><path d="M7 3Q12 1 13 5" fill="none" stroke="#1A4A9A" stroke-width="1.8"/><path d="M11 5H15L13 8Z" fill="#1A4A9A"/></svg>
<svg style="left:34px;top:169px" width="16" height="16" viewBox="0 0 16 16"><path d="M7 3V15L1 13Z" fill="#fff" stroke="#111" stroke-width="1.2"/><path d="M9 3V15L15 13Z" fill="#fff" stroke="#111" stroke-width="1.2"/><path d="M8 0V16" stroke="#1A6FD6" stroke-width="1.4"/></svg>
<svg style="left:34px;top:191px" width="16" height="16" viewBox="0 0 16 16"><path d="M2 13V9Q2 5 6 5V3Q9 0 11 4V8H15V13Z" fill="#fff" stroke="#111" stroke-width="1.2"/><path d="M4 11V10Q4 7 8 7V4.5M9 5V10H15" fill="none" stroke="#1A6FD6" stroke-width="1.4"/></svg>
<svg style="left:34px;top:213px" width="16" height="16" viewBox="0 0 16 16"><rect x="1.5" y="1.5" width="5" height="5" fill="#D4DEF4" stroke="#111" stroke-width="1.2"/><rect x="9.5" y="1.5" width="5" height="5" fill="#D4DEF4" stroke="#111" stroke-width="1.2"/><rect x="1.5" y="9.5" width="5" height="5" fill="#D4DEF4" stroke="#111" stroke-width="1.2"/><rect x="9.5" y="9.5" width="5" height="5" fill="#D4DEF4" stroke="#111" stroke-width="1.2"/></svg>
<svg style="left:34px;top:235px" width="16" height="16" viewBox="0 0 16 16"><path d="M8 1V15M1 8H15" stroke="#3A6AB0" stroke-width="2"/><path d="M8 0L5 4H11ZM8 16L5 12H11ZM0 8L4 5V11ZM16 8L12 5V11Z" fill="#3A6AB0"/></svg>
<svg style="left:34px;top:257px" width="16" height="16" viewBox="0 0 16 16"><path d="M6 3A6 6 0 1 0 11 3" fill="none" stroke="#3A6AB0" stroke-width="2.2"/><path d="M3 0L9 2L4 6Z" fill="#3A6AB0"/></svg>
<svg style="left:34px;top:279px" width="16" height="16" viewBox="0 0 16 16"><rect x="4.5" y="1.5" width="10" height="10" fill="#D4DEF4" stroke="#3D6FB8"/><rect x="1.5" y="7.5" width="7" height="7" fill="none" stroke="#111" stroke-dasharray="1 1"/></svg>
<svg style="left:34px;top:301px" width="16" height="16" viewBox="0 0 16 16"><path d="M8 1H10L15 15H8Z" fill="#D4DEF4" stroke="#3D6FB8" stroke-width="1.2"/><path d="M1.5 1.5H5.5V14.5H1.5Z" fill="#fff" stroke="#111" stroke-width="1.4"/><path d="M5.5 1V15" stroke="#111" stroke-dasharray="1 1"/></svg>
<svg style="left:34px;top:323px" width="16" height="16" viewBox="0 0 16 16"><path d="M0 8H4" stroke="#111" stroke-width="1.4"/><path d="M6 8H16" stroke="#1A6FD6" stroke-dasharray="2 1"/><path d="M3 13L9 3" stroke="#1A6FD6" stroke-width="1.4"/></svg>
<svg style="left:34px;top:345px" width="16" height="16" viewBox="0 0 16 16"><path d="M0 9H4" stroke="#111" stroke-width="1.4"/><path d="M5 9H11" stroke="#1A6FD6" stroke-dasharray="2 1"/><path d="M9 14L15 3" stroke="#1A6FD6" stroke-width="1.4"/></svg>
<svg style="left:34px;top:367px" width="16" height="16" viewBox="0 0 16 16"><rect x="1.5" y="3.5" width="13" height="11" fill="#D4DEF4" stroke="#111" stroke-width="1.4"/><rect x="7" y="2" width="3" height="3" fill="#3D6FB8"/></svg>
<svg style="left:34px;top:389px" width="16" height="16" viewBox="0 0 16 16"><rect x="1.5" y="3.5" width="13" height="11" fill="#D4DEF4" stroke="#111" stroke-width="1.4"/><rect x="3" y="2" width="3" height="3" fill="#3D6FB8"/><rect x="10" y="2" width="3" height="3" fill="#3D6FB8"/><path d="M6 3.5H9" stroke="#ECE9D8" stroke-width="1.5"/></svg>
<svg style="left:34px;top:411px" width="16" height="16" viewBox="0 0 16 16"><path d="M0 8H16" stroke="#111" stroke-width="2"/><path d="M3 4L8 8L3 12ZM13 4L8 8L13 12Z" fill="#1A4A9A"/></svg>
<svg style="left:34px;top:433px" width="16" height="16" viewBox="0 0 16 16"><path d="M1.5 16V8L7 2.5H16" fill="none" stroke="#111" stroke-width="1.4"/><path d="M1.5 8L7 2.5" stroke="#1A6FD6" stroke-width="1.6"/><path d="M1 1H7" stroke="#111" stroke-dasharray="1 1"/></svg>
<svg style="left:34px;top:455px" width="16" height="16" viewBox="0 0 16 16"><path d="M1.5 16V9Q1.5 2.5 8 2.5H16" fill="none" stroke="#111" stroke-width="1.4"/><path d="M1.5 9Q1.5 2.5 8 2.5" fill="none" stroke="#1A6FD6" stroke-width="2"/><path d="M1 1H7M1 1V7" stroke="#111" stroke-dasharray="1 1"/></svg>
<svg style="left:34px;top:477px" width="16" height="16" viewBox="0 0 16 16"><path d="M2 14L11 5" stroke="#C02020" stroke-width="3"/><path d="M5 8L8 11M9 3L13 7" stroke="#F0D020" stroke-width="1.5"/><path d="M11 1L15 5M13 1V4M15 3H12" stroke="#8AA0C8" stroke-width="1"/></svg>
<div style="left:5px;top:541px;width:24px;height:105px;box-sizing:border-box;border-left:1px solid #fff;border-top:1px solid #fff;border-right:1px solid #ACA899;border-bottom:1px solid #ACA899;background:#ECE9D8"></div>
<div style="left:7px;top:544px;width:20px;height:2px;background:#fff;border-bottom:1px solid #ACA899"></div>
<div style="left:7px;top:548px;width:20px;height:2px;background:#fff;border-bottom:1px solid #ACA899"></div>
<svg style="left:8px;top:556px" width="16" height="16" viewBox="0 0 16 16"><rect x="0" y="0" width="16" height="16" fill="#808080"/><path d="M2 10L8 4H15V8L9 14H2Z" fill="#fff" stroke="#111" stroke-width="1.2"/><path d="M2 10H9V14H2Z" fill="#0B8A8A" stroke="#111"/><path d="M9 10L15 4V8L9 14Z" fill="#fff" stroke="#111"/><rect x="10" y="6" width="3" height="3" fill="#0B8A8A"/></svg>
<svg style="left:8px;top:578px" width="16" height="16" viewBox="0 0 16 16"><rect x="0" y="0" width="16" height="16" fill="#808080"/><path d="M1 5L4 2H8V8L5 11H1Z" fill="#fff" stroke="#111"/><rect x="1" y="5" width="4" height="6" fill="#0B8A8A" stroke="#111" stroke-width="0.8"/><path d="M8 2L11 2V9H8" fill="#fff" stroke="#111"/><path d="M7 9L11 5H15V11L11 15H7Z" fill="#fff" stroke="#111"/><rect x="1" y="11" width="6" height="4" fill="#0B8A8A" stroke="#111" stroke-width="0.8"/><rect x="7" y="10" width="3" height="3" fill="#0B8A8A"/></svg>
<svg style="left:8px;top:600px" width="16" height="16" viewBox="0 0 16 16"><rect x="0" y="0" width="16" height="16" fill="#808080"/><rect x="2" y="7" width="12" height="9" fill="#fff" stroke="#111"/><path d="M1 6L14 1" stroke="#111" stroke-width="2" stroke-dasharray="2 1"/></svg>
<svg style="left:8px;top:622px" width="16" height="16" viewBox="0 0 16 16"><rect x="0.5" y="0.5" width="15" height="15" fill="#F8F8F0" stroke="#111"/><rect x="2" y="2" width="5" height="2" fill="#C8C8A0"/><circle cx="5" cy="9" r="3" fill="#fff" stroke="#333"/><path d="M8 6Q10 3 14 3M8 8Q10 6 14 6" stroke="#2040E0" fill="none"/><rect x="9" y="10" width="6" height="5" fill="#E8E4D0" stroke="#333" stroke-width="0.5"/></svg>
<div style="left:5px;top:647px;width:24px;height:268px;box-sizing:border-box;border-left:1px solid #fff;border-top:1px solid #fff;border-right:1px solid #ACA899;border-bottom:1px solid #ACA899;background:#ECE9D8"></div>
<div style="left:7px;top:650px;width:20px;height:2px;background:#fff;border-bottom:1px solid #ACA899"></div>
<div style="left:7px;top:654px;width:20px;height:2px;background:#fff;border-bottom:1px solid #ACA899"></div>
<svg style="left:8px;top:662px" width="16" height="16" viewBox="0 0 16 16"><path d="M2 10L8 4H15V8L9 14H2Z" fill="#fff" stroke="#111" stroke-width="1.2"/><path d="M2 10H9V14H2Z" fill="#0B8A8A" stroke="#111"/><path d="M9 10L15 4V8L9 14Z" fill="#fff" stroke="#111"/><rect x="10" y="6" width="3" height="3" fill="#0B8A8A"/><path d="M16 12V16H12Z" fill="#000"/></svg>
<svg style="left:8px;top:684px" width="16" height="16" viewBox="0 0 16 16"><path d="M1.5 14.5V1.5H14.5V9" fill="none" stroke="#0B8A8A" stroke-width="1.2"/><path d="M2 15V7L5 3L8 7H7V11H11V9L15 12.5L11 16V14H5V7H2Z" fill="#fff" stroke="#111" stroke-width="1.1"/><path d="M16 12V16H12Z" fill="#000"/></svg>
<svg style="left:8px;top:706px" width="16" height="16" viewBox="0 0 16 16"><rect x="1.5" y="1.5" width="13" height="13" fill="none" stroke="#0B8A8A" stroke-width="1.2"/><path d="M2 15V7L5 3L8 7H7V11H11V9L15 12.5L11 16V14H5V7H2Z" fill="#00E8E8" stroke="#111" stroke-width="1.1"/><path d="M9 7L14 2M11 8L15 4" stroke="#777"/><path d="M13 1H16V4Z" fill="#000"/><path d="M16 12V16H12Z" fill="#000"/></svg>
<svg style="left:8px;top:728px" width="16" height="16" viewBox="0 0 16 16"><rect x="3" y="3" width="8" height="11" fill="#00E0E0" stroke="#111"/><rect x="5" y="5" width="3" height="6" fill="#fff" stroke="#111"/><path d="M1 7H4M10 6L14 2M12 7L15 4" stroke="#666"/><path d="M16 12V16H12Z" fill="#000"/></svg>
<svg style="left:8px;top:750px" width="16" height="16" viewBox="0 0 16 16"><path d="M3 3L1 8L3 13" fill="none" stroke="#111" stroke-dasharray="1 1"/><path d="M4 9Q6 4 9 6" stroke="#A01818" stroke-width="2" fill="none"/><rect x="11.5" y="2.5" width="3" height="11" fill="#fff" stroke="#111"/><path d="M16 12V16H12Z" fill="#000"/></svg>
<svg style="left:8px;top:772px" width="16" height="16" viewBox="0 0 16 16"><path d="M2 4L5 2H9V15H2Z" fill="#0B7F7F" stroke="#111"/><path d="M5 8H9V12H5Z" fill="#fff" stroke="#111"/><path d="M10 7L14 3M12 3H14V5" stroke="#333"/><path d="M16 12V16H12Z" fill="#000"/></svg>
<svg style="left:8px;top:794px" width="16" height="16" viewBox="0 0 16 16"><path d="M1.5 4.5L4.5 1.5H14.5V11.5L11.5 14.5H1.5Z" fill="#fff" stroke="#A01818" stroke-width="1.2"/><path d="M1.5 4.5H11.5V14.5M11.5 4.5L14.5 1.5" fill="none" stroke="#A01818"/><circle cx="8" cy="9" r="3.2" fill="#C8C8C8" stroke="#A01818"/><path d="M16 12V16H12Z" fill="#000"/></svg>
<svg style="left:8px;top:816px" width="16" height="16" viewBox="0 0 16 16"><path d="M1 6L5 2H14L10 6Z" fill="#fff" stroke="#A01818" stroke-width="1.2"/><path d="M2 11L5 8H14V11L11 14H2Z" fill="#fff" stroke="#111"/><path d="M2 11H11V14H2Z" fill="#0B8A8A"/><path d="M16 12V16H12Z" fill="#000"/></svg>
<svg style="left:8px;top:838px" width="16" height="16" viewBox="0 0 16 16"><path d="M1.5 1V15M14.5 1V9M2 6H14" stroke="#111" stroke-width="1.3"/><circle cx="8" cy="6" r="3" fill="#F07020"/><circle cx="8" cy="6" r="1.5" fill="#FFF060"/><path d="M16 12V16H12Z" fill="#000"/></svg>
<svg style="left:8px;top:860px" width="16" height="16" viewBox="0 0 16 16"><path d="M1 10L6 4L9 7V15H1Z" fill="#fff" stroke="#111"/><path d="M1 10H6V15H1Z" fill="#0B8A8A"/><path d="M5 9L9 5L11 7V13H5Z" fill="#fff" stroke="#111"/><path d="M11 12L14 4" stroke="#E0E020" stroke-width="2.5"/><path d="M13 5L14.5 2" stroke="#A020C0" stroke-width="2.5"/><path d="M16 12V16H12Z" fill="#000"/></svg>
<svg style="left:8px;top:882px" width="16" height="16" viewBox="0 0 16 16"><path d="M2 6L6 3H15V9L11 12H2Z" fill="#fff" stroke="#111" stroke-width="1.1"/><path d="M6 3H15L11 7H2Z" fill="#fff"/><rect x="2" y="9" width="9" height="4" fill="#0B8A8A" stroke="#111"/><path d="M0 1L10 15H6L0 6Z" fill="#FFFF00"/><path d="M1 1L10 15" stroke="#111" stroke-width="0.8"/><path d="M16 12V16H12Z" fill="#000"/></svg>
<svg style="left:8px;top:904px" width="16" height="16" viewBox="0 0 16 16"><path d="M1 8L7 1H10L15 8" fill="#fff" stroke="#111" stroke-dasharray="2 1"/><path d="M4 6L9 3L14 8" fill="#fff"/><circle cx="6" cy="9" r="2.5" fill="#fff" stroke="#111" stroke-width="1.5"/><path d="M9 7H15L14 11Q12 13 10 11Z" fill="#000"/></svg>
<div style="left:1259px;top:118px;width:25px;height:420px;box-sizing:border-box;border-left:1px solid #fff;border-top:1px solid #fff;border-right:1px solid #ACA899;border-bottom:1px solid #ACA899;background:#ECE9D8"></div>
<div style="left:1261px;top:120px;width:21px;height:2px;background:#fff;border-bottom:1px solid #ACA899"></div>
<div style="left:1261px;top:124px;width:21px;height:2px;background:#fff;border-bottom:1px solid #ACA899"></div>
<svg style="left:1263px;top:132px" width="16" height="16" viewBox="0 0 16 16"><path d="M3 8H12" stroke="#444" stroke-width="1.5"/><rect x="0" y="6.5" width="3" height="3" fill="#1A6FD6"/><circle cx="13" cy="8" r="2.3" fill="#fff" stroke="#1A6FD6" stroke-width="1.3"/></svg>
<svg style="left:1263px;top:153px" width="16" height="16" viewBox="0 0 16 16"><path d="M4 14V6H12" stroke="#444" stroke-width="1.5" fill="none" stroke-dasharray="2 1"/><rect x="2.5" y="13" width="3" height="3" fill="#1A6FD6"/><circle cx="13" cy="6" r="2.3" fill="#fff" stroke="#1A6FD6" stroke-width="1.3"/></svg>
<svg style="left:1263px;top:182px" width="16" height="16" viewBox="0 0 16 16"><path d="M3 13L13 3" stroke="#111" stroke-width="1.4"/><circle cx="13" cy="3" r="2.3" fill="#fff" stroke="#1A6FD6" stroke-width="1.3"/><circle cx="3" cy="13" r="2.3" fill="#fff" stroke="#1A6FD6" stroke-width="1.3"/></svg>
<svg style="left:1263px;top:204px" width="16" height="16" viewBox="0 0 16 16"><path d="M1 15L15 1" stroke="#111" stroke-width="1.4"/><circle cx="8" cy="8" r="2.3" fill="#fff" stroke="#1A6FD6" stroke-width="1.3"/></svg>
<svg style="left:1263px;top:226px" width="16" height="16" viewBox="0 0 16 16"><path d="M1 1L15 15M15 1L1 15" stroke="#111" stroke-width="1.6"/><circle cx="8" cy="8" r="2.3" fill="#fff" stroke="#1A6FD6" stroke-width="1.3"/></svg>
<svg style="left:1263px;top:248px" width="16" height="16" viewBox="0 0 16 16"><path d="M1 1L15 15" stroke="#111" stroke-width="1.6"/><path d="M15 1L1 15" stroke="#111" stroke-width="1.6" stroke-dasharray="2 2"/><circle cx="8" cy="8" r="2.3" fill="#fff" stroke="#1A6FD6" stroke-width="1.3"/></svg>
<svg style="left:1263px;top:270px" width="16" height="16" viewBox="0 0 16 16"><path d="M1 8H7" stroke="#444" stroke-width="1.6"/><path d="M9 8H16" stroke="#444" stroke-width="1.6" stroke-dasharray="2 1.5"/></svg>
<svg style="left:1263px;top:298px" width="16" height="16" viewBox="0 0 16 16"><circle cx="8" cy="8" r="6.5" fill="#D4DEF4" stroke="#111" stroke-width="1.4"/><circle cx="8" cy="8" r="1.8" fill="#fff" stroke="#1A6FD6" stroke-width="1.3"/></svg>
<svg style="left:1263px;top:320px" width="16" height="16" viewBox="0 0 16 16"><circle cx="8" cy="8" r="5.5" fill="#D4DEF4" stroke="#111" stroke-width="1.2"/><circle cx="8" cy="2.5" r="2.3" fill="#fff" stroke="#1A6FD6" stroke-width="1.3"/><circle cx="2.5" cy="8" r="2.3" fill="#fff" stroke="#1A6FD6" stroke-width="1.3"/><circle cx="13.5" cy="8" r="2.3" fill="#fff" stroke="#1A6FD6" stroke-width="1.3"/><circle cx="8" cy="13.5" r="2.3" fill="#fff" stroke="#1A6FD6" stroke-width="1.3"/></svg>
<svg style="left:1263px;top:342px" width="16" height="16" viewBox="0 0 16 16"><circle cx="9" cy="9" r="6" fill="#D4DEF4" stroke="#111" stroke-width="1.4"/><path d="M1 2L5 6" stroke="#111" stroke-width="1.2"/><circle cx="4" cy="4" r="2.3" fill="#fff" stroke="#1A6FD6" stroke-width="1.3"/></svg>
<svg style="left:1263px;top:370px" width="16" height="16" viewBox="0 0 16 16"><path d="M8 2V10M1 10H15" stroke="#111" stroke-width="1.5"/><circle cx="8" cy="10" r="2.3" fill="#fff" stroke="#1A6FD6" stroke-width="1.3"/></svg>
<svg style="left:1263px;top:392px" width="16" height="16" viewBox="0 0 16 16"><path d="M1 12L11 2M5 15L15 5" stroke="#111" stroke-width="1.8"/></svg>
<svg style="left:1263px;top:414px" width="16" height="16" viewBox="0 0 16 16"><rect x="4.5" y="1.5" width="8" height="6" fill="#E8E070" stroke="#3D6FB8"/><circle cx="11" cy="10" r="3.5" fill="#E8E070" stroke="#3D6FB8"/><circle cx="3" cy="9" r="2.3" fill="#fff" stroke="#1A6FD6" stroke-width="1.3"/></svg>
<svg style="left:1263px;top:436px" width="16" height="16" viewBox="0 0 16 16"><circle cx="8" cy="8" r="2.2" fill="#fff" stroke="#1A6FD6" stroke-width="1.3"/></svg>
<svg style="left:1263px;top:464px" width="16" height="16" viewBox="0 0 16 16"><path d="M1 15L13 3" stroke="#111" stroke-width="1.5"/><circle cx="8" cy="6" r="2.3" fill="#fff" stroke="#1A6FD6" stroke-width="1.3"/><circle cx="13" cy="11" r="2.3" fill="#fff" stroke="#1A6FD6" stroke-width="1.3"/></svg>
<svg style="left:1263px;top:486px" width="16" height="16" viewBox="0 0 16 16"><path d="M5 15V8Q5 2 10 3V14" fill="none" stroke="#888" stroke-width="2.5"/><path d="M1 15L14 2" stroke="#E02020" stroke-width="1.6"/><rect x="12" y="12" width="4" height="4" fill="#fff" stroke="#1A6FD6"/></svg>
<svg style="left:1263px;top:512px" width="16" height="16" viewBox="0 0 16 16"><path d="M4 15V7A4.5 4.5 0 0 1 13 7V12" fill="none" stroke="#B01818" stroke-width="3.5"/><path d="M2.5 13H5.5M11.5 13H14" stroke="#fff" stroke-width="2"/><rect x="12" y="12" width="4" height="4" fill="#fff" stroke="#1A6FD6"/></svg>
<div style="left:1263px;top:175px;width:18px;height:1px;background:#C5C2B2;border-bottom:1px solid #fff"></div>
<div style="left:1263px;top:291px;width:18px;height:1px;background:#C5C2B2;border-bottom:1px solid #fff"></div>
<div style="left:1263px;top:363px;width:18px;height:1px;background:#C5C2B2;border-bottom:1px solid #fff"></div>
<div style="left:1263px;top:456px;width:18px;height:1px;background:#C5C2B2;border-bottom:1px solid #fff"></div>
<div style="left:1263px;top:507px;width:18px;height:1px;background:#C5C2B2;border-bottom:1px solid #fff"></div>
<div style="left:56px;top:106px;width:1202px;height:808px;background:#9D9A8C"></div>
<div style="left:57px;top:107px;width:1201px;height:807px;background:#6E6C60"></div>
<div style="left:58px;top:108px;width:1181px;height:788px;background:#000"></div>
<svg style="left:58px;top:108px" width="1181" height="788" viewBox="58 108 1181 788">
<g fill="none" stroke="#fff" stroke-width="1" shape-rendering="crispEdges">
<path d="M207.1 352.9 L259.6 337.1 L313.1 326.4 L367.4 320.6 L422.0 319.9 L476.4 324.3 L530.1 333.6 L582.8 347.9 L634.0 366.9 L683.1 390.6 L729.9 418.8 L773.8 451.1 L814.6 487.4 L851.9 527.3 L885.3 570.4 L914.6 616.5 L939.5 665.0 L959.8 715.7 L975.3 768.0 L986.0 821.5 L990.9 865.2" stroke="#00FF00"/>
<path d="M148.7 185.8 L230.3 162.6 L311.0 148.9 L392.7 143.8 L474.5 147.5 L555.4 159.8 L634.6 180.6 L711.1 209.8 L784.1 246.9 L852.7 291.5 L916.2 343.2 L973.8 401.3 L1024.9 465.3 L1069.0 534.3 L1105.4 607.6 L1133.9 684.3 L1154.0 763.7 L1165.7 844.7 L1166.3 852.1"/>
<path d="M959.8 495.1 L965.2 502.5 L1010.6 574.7 L1047.2 651.7 L1074.4 732.5 L1091.8 815.9 L1092.9 823.9"/>
<path d="M147.2 182.1L205.5 349.5"/>
<path d="M563.3 797.3L859 536.3"/>
<path d="M863 534.7L964.8 493"/>
<path d="M994.8 863.4L1096.8 823.3"/>
<path d="M994.8 865.2L1172 852.3"/>
<path d="M1030 190.5H1094M1062.5 159V223" stroke="#fff"/>
<rect x="1059.5" y="187.5" width="6" height="6" stroke="#fff"/>
<path d="M1062 187h1v1h-1zM1059 190h1v1h-1zM1062 190h1v1h-1zM1065 190h1v1h-1zM1062 193h1v1h-1z" fill="#000" stroke="none"/>
<path d="M81.5 871.5V795M81.5 871.5H157.5"/>
<rect x="73.5" y="863.5" width="15" height="15"/>
<path d="M74.5 795.5H88.5L81.5 777Z"/>
<path d="M157.5 864.5V878.5L175.5 871.5Z"/>
<path d="M79.5 795V786M83.5 795V786M157.5 869.5H168M157.5 873.5H168" stroke="#9a9a9a"/>
<path d="M76 746L83.5 756L91 746M83.5 756V764.5"/>
<path d="M189.5 863L203.5 880.5M203.5 863L189.5 880.5"/>
</g>
<path d="M149.0 186.8L159.5 180.4L161.2 185.3Z" fill="#fff" stroke="#fff" stroke-width="0.6"/>
<path d="M1167.0 852.0L1163.5 840.2L1168.6 839.8Z" fill="#fff" stroke="#fff" stroke-width="0.6"/>
<path d="M960.0 495.0L969.2 503.1L965.0 506.2Z" fill="#fff" stroke="#fff" stroke-width="0.6"/>
<path d="M1092.0 824.0L1087.8 812.5L1093.0 811.8Z" fill="#fff" stroke="#fff" stroke-width="0.6"/>
<g fill="none" stroke="#FFFF00" stroke-width="1">
<path d="M827.3 238.4L840.9 240.2L847.8 251.7"/>
<path d="M1068 630L1077.6 638.9L1077.6 652.7"/>
</g>
<g transform="translate(806,246.5) rotate(33) translate(0,-12)" fill="none" stroke="#FFFF00" stroke-width="1.1"><path transform="translate(0,0)" d="M0.5 3Q0.5 0 3.5 0Q6.5 0 6.5 3Q6.5 5 4 7L0 12H7"/><path transform="translate(10.2,0)" d="M0.5 1.5Q1.5 0 3.5 0Q6.5 0 6.5 3Q6.5 5.5 3 5.5M3 5.5Q7 5.5 7 8.5Q7 12 3.5 12Q1 12 0 10.5"/><path transform="translate(20.4,0)" d="M6.5 0H1L0.5 5Q2 4.3 3.5 4.3Q7 4.3 7 8Q7 12 3.5 12Q1 12 0 10.5"/><path transform="translate(30.599999999999998,0)" d="M1.5 11.5H2.5"/><path transform="translate(35.599999999999994,0)" d="M1.5 2.5L4 0V12"/><path transform="translate(45.8,0)" d="M3.5 0Q0.7 0 0.7 2.8Q0.7 5.5 3.5 5.5Q7 5.5 7 8.7Q7 12 3.5 12Q0 12 0 8.7Q0 5.5 3.5 5.5Q6.3 5.5 6.3 2.8Q6.3 0 3.5 0Z"/></g>
<g transform="translate(1047.5,631) rotate(66) translate(0,-12)" fill="none" stroke="#FFFF00" stroke-width="1.1"><path transform="translate(0,0)" d="M0 0H7L2.5 12"/><path transform="translate(10.6,0)" d="M3.5 0Q0.7 0 0.7 2.8Q0.7 5.5 3.5 5.5Q7 5.5 7 8.7Q7 12 3.5 12Q0 12 0 8.7Q0 5.5 3.5 5.5Q6.3 5.5 6.3 2.8Q6.3 0 3.5 0Z"/><path transform="translate(21.2,0)" d="M1.5 11.5H2.5"/><path transform="translate(26.2,0)" d="M6.5 0H1L0.5 5Q2 4.3 3.5 4.3Q7 4.3 7 8Q7 12 3.5 12Q1 12 0 10.5"/><path transform="translate(36.8,0)" d="M1.5 2.5L4 0V12"/></g>
</svg>
<div style="left:1239px;top:108px;width:17px;height:788px;background:#FDFDFA"></div>
<div style="left:1240px;top:108px;width:15px;height:16px;box-sizing:border-box;border:1px solid #fff;border-radius:2px;background:linear-gradient(135deg,#D6E2FC,#B9CDF6 60%,#AFC4F2);box-shadow:inset -1px -1px 0 #8FA9E0"></div>
<svg style="left:1240px;top:108px" width="15" height="16"><path d="M4 10L7.5 6.5L11 10" fill="none" stroke="#4D6185" stroke-width="2"/></svg>
<div style="left:1240px;top:125px;width:15px;height:17px;box-sizing:border-box;border:1px solid #fff;border-radius:2px;background:linear-gradient(135deg,#D6E2FC,#B9CDF6 60%,#AFC4F2);box-shadow:inset -1px -1px 0 #8FA9E0"></div>
<svg style="left:1240px;top:125px" width="15" height="17"><path d="M4 5.5H11M4 7.5H11M4 9.5H11M4 11.5H11" stroke="#fff" stroke-width="1"/></svg>
<div style="left:1240px;top:879px;width:15px;height:16px;box-sizing:border-box;border:1px solid #fff;border-radius:2px;background:linear-gradient(135deg,#D6E2FC,#B9CDF6 60%,#AFC4F2);box-shadow:inset -1px -1px 0 #8FA9E0"></div>
<svg style="left:1240px;top:879px" width="15" height="16"><path d="M4 6L7.5 9.5L11 6" fill="none" stroke="#4D6185" stroke-width="2"/></svg>
<div style="left:58px;top:896px;width:1198px;height:16px;background:#ECE9D8"></div>
<div style="left:838px;top:896px;width:401px;height:16px;background:#FDFDFA"></div>
<div style="left:838px;top:896px;width:4px;height:16px;background:#fff;border-left:1px solid #B8B49E;box-sizing:border-box"></div>
<div style="left:843px;top:896px;width:16px;height:15px;box-sizing:border-box;border:1px solid #fff;border-radius:2px;background:linear-gradient(135deg,#D6E2FC,#B9CDF6 60%,#AFC4F2);box-shadow:inset -1px -1px 0 #8FA9E0"></div>
<svg style="left:843px;top:896px" width="16" height="15"><path d="M9.5 4L6 7.5L9.5 11" fill="none" stroke="#4D6185" stroke-width="2"/></svg>
<div style="left:1007px;top:896px;width:16px;height:15px;box-sizing:border-box;border:1px solid #fff;border-radius:2px;background:linear-gradient(135deg,#D6E2FC,#B9CDF6 60%,#AFC4F2);box-shadow:inset -1px -1px 0 #8FA9E0"></div>
<svg style="left:1007px;top:896px" width="16" height="15"><path d="M5.5 4V11M7.5 4V11M9.5 4V11M11.5 4V11" stroke="#fff" stroke-width="1"/></svg>
<div style="left:1223px;top:896px;width:16px;height:15px;box-sizing:border-box;border:1px solid #fff;border-radius:2px;background:linear-gradient(135deg,#D6E2FC,#B9CDF6 60%,#AFC4F2);box-shadow:inset -1px -1px 0 #8FA9E0"></div>
<svg style="left:1223px;top:896px" width="16" height="15"><path d="M6 4L9.5 7.5L6 11" fill="none" stroke="#4D6185" stroke-width="2"/></svg>
<svg style="left:58px;top:896px" width="780" height="16"><g fill="#ECE9D8" stroke="#B5B19C"><rect x="0.5" y="0.5" width="14" height="15"/><rect x="15.5" y="0.5" width="14" height="15"/><rect x="30.5" y="0.5" width="14" height="15"/><rect x="45.5" y="0.5" width="14" height="15"/></g><g fill="#C0BDB0" stroke="#C0BDB0"><path d="M4 4V12M11 4L6 8L11 12Z"/><path d="M25 4L20 8L25 12Z"/><path d="M35 4L40 8L35 12Z"/><path d="M49 4L54 8L49 12ZM56 4V12"/></g><path d="M60 0H118L112 15.5H66Z" fill="#000"/><path d="M118 0L112 15.5H168L174 0" fill="none" stroke="#555" stroke-width="1"/></svg>
<div class="t" style="left:130.5px;top:899.20px;font-size:11.34px;font-family:Liberation Sans;font-weight:normal;color:#fff;transform:scaleX(0.9222);transform-origin:0 0;">Modell</div>
<div class="t" style="left:178.3px;top:899.20px;font-size:11.34px;font-family:Liberation Sans;font-weight:normal;color:#000;transform:scaleX(0.9097);transform-origin:0 0;">Layout1</div>
<div style="left:1256px;top:108px;width:2px;height:806px;background:#ECE9D8"></div>
<div style="left:1258px;top:106px;width:1px;height:808px;background:#fff"></div>
<div style="left:58px;top:912px;width:1200px;height:2px;background:#ECE9D8"></div>
<div style="left:4px;top:914px;width:1280px;height:1px;background:#fff"></div>
<div style="left:4px;top:915px;width:1280px;height:4px;background:#ECE9D8"></div>
<div style="left:4px;top:919px;width:1280px;height:1px;background:#000"></div>
<div style="left:4px;top:920px;width:1280px;height:56px;background:#ECE9D8"></div>
<div style="left:21px;top:930px;width:1256px;height:1px;background:#000"></div>
<div style="left:21px;top:930px;width:1px;height:42px;background:#000"></div>
<div style="left:22px;top:931px;width:1255px;height:23px;background:#FDFDFA"></div>
<div style="left:22px;top:953px;width:1255px;height:1px;background:#A9A9A0"></div>
<div style="left:1277px;top:930px;width:1px;height:24px;background:#fff"></div>
<div style="left:10px;top:928px;width:2px;height:40px;background:#fff;border-right:1px solid #ACA899"></div>
<div style="left:14px;top:928px;width:2px;height:40px;background:#fff;border-right:1px solid #ACA899"></div>
<div class="t" style="left:22.5px;top:934.93px;font-size:11.84px;font-family:Liberation Mono;font-weight:normal;color:#000;transform:scaleX(1.1263);transform-origin:0 0;">Befehl: *Abbruch*</div>
<div style="left:1261px;top:932px;width:14px;height:10px;box-sizing:border-box;border:1px solid #fff;border-radius:2px;background:linear-gradient(135deg,#D6E2FC,#B9CDF6 60%,#AFC4F2);box-shadow:inset -1px -1px 0 #8FA9E0"></div>
<svg style="left:1261px;top:932px" width="14" height="10"><path d="M4 7L7 4.5L10 7" fill="none" stroke="#4D6185" stroke-width="1.5"/></svg>
<div style="left:1261px;top:943px;width:14px;height:10px;box-sizing:border-box;border:1px solid #fff;border-radius:2px;background:linear-gradient(135deg,#D6E2FC,#B9CDF6 60%,#AFC4F2);box-shadow:inset -1px -1px 0 #8FA9E0"></div>
<svg style="left:1261px;top:943px" width="14" height="10"><path d="M4 4L7 6.5L10 4" fill="none" stroke="#4D6185" stroke-width="1.5"/></svg>
<div style="left:22px;top:954px;width:1168px;height:18px;background:#FDFDFA"></div>
<div style="left:1190px;top:954px;width:68px;height:18px;background:#ECE9D8"></div>
<div style="left:1258px;top:954px;width:1px;height:18px;background:#fff"></div>
<div style="left:1193px;top:955px;width:15px;height:16px;box-sizing:border-box;border:1px solid #fff;border-radius:2px;background:linear-gradient(135deg,#D6E2FC,#B9CDF6 60%,#AFC4F2);box-shadow:inset -1px -1px 0 #8FA9E0"></div>
<svg style="left:1193px;top:955px" width="15" height="16"><path d="M9.5 4L6 7.5L9.5 11" fill="none" stroke="#4D6185" stroke-width="2"/></svg>
<div style="left:1210px;top:955px;width:16px;height:16px;box-sizing:border-box;border:1px solid #fff;border-radius:2px;background:linear-gradient(135deg,#D6E2FC,#B9CDF6 60%,#AFC4F2);box-shadow:inset -1px -1px 0 #8FA9E0"></div>
<svg style="left:1210px;top:955px" width="16" height="16"><path d="M5.5 5V11M7.5 5V11M9.5 5V11M11.5 5V11" stroke="#F4F8FF" stroke-width="1"/></svg>
<div style="left:1226px;top:955px;width:16px;height:16px;background:#FDFDFA"></div>
<div style="left:1242px;top:955px;width:15px;height:16px;box-sizing:border-box;border:1px solid #fff;border-radius:2px;background:linear-gradient(135deg,#D6E2FC,#B9CDF6 60%,#AFC4F2);box-shadow:inset -1px -1px 0 #8FA9E0"></div>
<svg style="left:1242px;top:955px" width="15" height="16"><path d="M6 4L9.5 7.5L6 11" fill="none" stroke="#4D6185" stroke-width="2"/></svg>
<div class="t" style="left:22.5px;top:959.93px;font-size:11.84px;font-family:Liberation Mono;font-weight:normal;color:#000;transform:scaleX(1.1263);transform-origin:0 0;">Befehl:</div>
<div style="left:4px;top:972px;width:1280px;height:2px;background:#ECE9D8"></div>
<div style="left:4px;top:974px;width:1280px;height:1px;background:#B8B4A2"></div>
<div style="left:4px;top:975px;width:1280px;height:1px;background:#fff"></div>
<div style="left:4px;top:976px;width:1280px;height:22px;background:#ECE9D8"></div>
<div style="left:4px;top:976px;width:1280px;height:1px;background:#D0CCBA"></div>
<div class="t" style="left:10.5px;top:982.36px;font-size:12.21px;font-family:Liberation Sans;font-weight:normal;color:#000;transform:scaleX(0.8694);transform-origin:0 0;">Ziel: ZEICHNUNG1</div>
<div style="left:110px;top:979px;width:140px;height:18px;box-sizing:border-box;border:1px solid #ACA899;border-right-color:#fff;border-bottom-color:#fff;background:#ECE9D8"></div>
<div class="t" style="left:113px;top:982.36px;font-size:12.21px;font-family:Liberation Sans;font-weight:normal;color:#000;transform:scaleX(0.8750);transform-origin:0 0;">314.00, 267.76, 0.00</div>
<div style="left:255px;top:979px;width:43px;height:18px;box-sizing:border-box;border-top:1px solid #fff;border-left:1px solid #fff;border-right:1px solid #ACA899;border-bottom:1px solid #ACA899;background:#ECE9D8"></div>
<div class="t" style="left:258px;top:982.82px;font-size:12.50px;font-family:Liberation Sans;font-weight:normal;color:#000;transform:scaleX(0.8306);transform-origin:0 0;">ORTHO</div>
<div style="left:302px;top:979px;width:41px;height:18px;box-sizing:border-box;border-top:1px solid #fff;border-left:1px solid #fff;border-right:1px solid #ACA899;border-bottom:1px solid #ACA899;background:#ECE9D8"></div>
<div class="t" style="left:304px;top:982.82px;font-size:12.50px;font-family:Liberation Sans;font-weight:normal;color:#000;transform:scaleX(0.8354);transform-origin:0 0;">POLAR</div>
<div style="left:346px;top:979px;width:41px;height:18px;box-sizing:border-box;border-top:1px solid #fff;border-left:1px solid #fff;border-right:1px solid #ACA899;border-bottom:1px solid #ACA899;background:#ECE9D8"></div>
<div class="t" style="left:348.6px;top:982.82px;font-size:12.50px;font-family:Liberation Sans;font-weight:normal;color:#000;transform:scaleX(0.8113);transform-origin:0 0;">OFANG</div>
<div style="left:390px;top:979px;width:49px;height:18px;box-sizing:border-box;border-top:2px solid #000;border-left:2px solid #000;border-right:1px solid #fff;border-bottom:1px solid #fff;background:#F3F1E8"></div>
<div class="t" style="left:394.5px;top:982.82px;font-size:12.50px;font-family:Liberation Sans;font-weight:normal;color:#000;transform:scaleX(0.8255);transform-origin:0 0;">OTRACK</div>
<div style="left:442px;top:979px;width:28px;height:18px;box-sizing:border-box;border-top:2px solid #000;border-left:2px solid #000;border-right:1px solid #fff;border-bottom:1px solid #fff;background:#F3F1E8"></div>
<div class="t" style="left:446.7px;top:982.82px;font-size:12.50px;font-family:Liberation Sans;font-weight:normal;color:#000;transform:scaleX(0.8071);transform-origin:0 0;">DYN</div>
<div style="left:474px;top:979px;width:24px;height:18px;box-sizing:border-box;border-top:1px solid #fff;border-left:1px solid #fff;border-right:1px solid #ACA899;border-bottom:1px solid #ACA899;background:#ECE9D8"></div>
<div class="t" style="left:476px;top:982.82px;font-size:12.50px;font-family:Liberation Sans;font-weight:normal;color:#000;transform:scaleX(0.8157);transform-origin:0 0;">LST</div>
<div style="left:501px;top:979px;width:49px;height:18px;box-sizing:border-box;border-top:2px solid #000;border-left:2px solid #000;border-right:1px solid #fff;border-bottom:1px solid #fff;background:#F3F1E8"></div>
<div class="t" style="left:505.3px;top:982.82px;font-size:12.50px;font-family:Liberation Sans;font-weight:normal;color:#000;transform:scaleX(0.8307);transform-origin:0 0;">MODELL</div>
<div style="left:1224px;top:979px;width:44px;height:18px;box-sizing:border-box;border:1px solid #ACA899;border-right-color:#fff;border-bottom-color:#fff"></div>
<svg style="left:1272px;top:988px" width="10" height="6"><path d="M1 0.5H8L4.5 4.5Z" fill="#000"/></svg>
<div style="left:4px;top:998px;width:1280px;height:4px;background:linear-gradient(#2C6AE0,#3D8BF6 2px,#3A84F0)"></div>
<div style="left:4px;top:998px;width:96px;height:4px;background:linear-gradient(#2E7A2E,#4FA44F 2px,#5AAE5A)"></div>
<div style="left:1191px;top:998px;width:93px;height:4px;background:linear-gradient(#0C80D8,#12A8F2 2px,#10A0EE)"></div>
<svg style="left:1226px;top:980px" width="42" height="17"><rect x="2" y="1" width="15" height="13" fill="#0E62D6"/><rect x="11" y="1" width="6" height="13" fill="#FFF200"/><path d="M3 7.5L7 4V6H11V9H7V11Z" fill="#FFF200"/><path d="M2 14H17" stroke="#1A2A50"/><path d="M22 9V6A4 4 0 0 1 30 5V9" fill="none" stroke="#6A5000" stroke-width="2.2"/><path d="M29 6V9" stroke="#F08010" stroke-width="1.5"/><path d="M22 9V6A4 4 0 0 1 30 5" fill="none" stroke="#F0E040" stroke-width="0.8"/><rect x="17" y="8" width="11" height="8" rx="2" fill="#9A8A00" stroke="#3A3000" stroke-width="0.8"/><path d="M18 10H27M18 12H27M18 14H27" stroke="#E8D840" stroke-width="0.8"/><rect x="21.5" y="9" width="2" height="6" fill="#FFFFC0"/></svg>
</body></html>
